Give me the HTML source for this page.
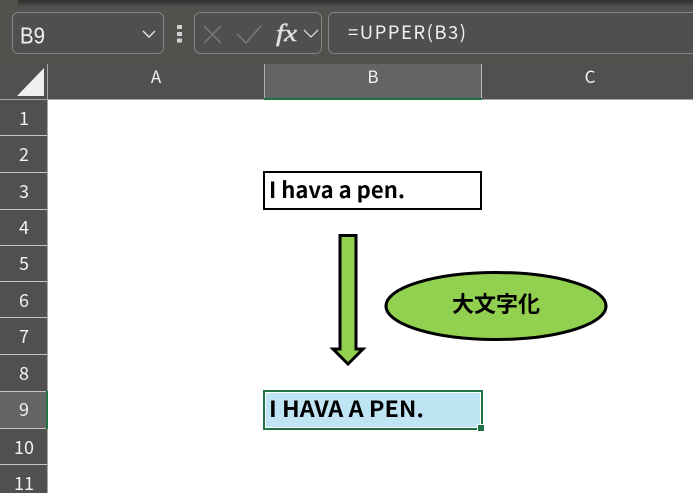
<!DOCTYPE html>
<html><head><meta charset="utf-8"><style>
html,body{margin:0;padding:0;background:#fff}
body{width:693px;height:493px;overflow:hidden;position:relative}
svg{position:absolute;left:0;top:0;display:block}
text{font-family:"Noto Sans CJK JP","Liberation Sans",sans-serif}
</style></head><body>
<svg width="693" height="493" viewBox="0 0 693 493" xmlns="http://www.w3.org/2000/svg">
<defs><linearGradient id="t" x1="0" y1="0" x2="0" y2="1"><stop offset="0" stop-color="#2e2e2c"/><stop offset="1" stop-color="#525250"/></linearGradient></defs>
<!-- toolbar -->
<rect x="0" y="0" width="693" height="64" fill="#51514e"/>
<rect x="0" y="0" width="693" height="7" fill="url(#t)"/>
<rect x="0" y="0" width="18" height="7" fill="#51514e"/>
<rect x="12.500" y="12.500" width="151" height="41" rx="6" fill="#4f4f4f" stroke="#858585"/>
<text x="20" y="43.500" font-size="23" fill="#f2f2f2" style="font-family:'Liberation Sans',sans-serif" textLength="25" lengthAdjust="spacingAndGlyphs">B9</text>
<path d="M143 31l6 6 6-6" fill="none" stroke="#e6e6e6" stroke-width="1.400"/>
<rect x="177" y="25" width="5" height="4" fill="#cfcfcf"/><rect x="177" y="32" width="5" height="4" fill="#cfcfcf"/><rect x="177" y="38.500" width="5" height="4" fill="#cfcfcf"/>
<rect x="194.500" y="12.500" width="127" height="41" rx="6" fill="#4f4f4f" stroke="#858585"/>
<path d="M204 26l17 17M221 26l-17 17" stroke="#7b7b7b" stroke-width="1.500" fill="none"/>
<path d="M237 34l9 9 15-17" stroke="#7b7b7b" stroke-width="1.500" fill="none"/>
<text x="276" y="41" font-size="24" font-style="italic" fill="#e0e0e0" stroke="#e0e0e0" stroke-width=".5" style="font-family:'Liberation Serif',serif" textLength="21" lengthAdjust="spacingAndGlyphs">fx</text>
<path d="M304 30l7 7 7-7" fill="none" stroke="#d8d8d8" stroke-width="1.300"/>
<rect x="328.500" y="12.500" width="380" height="41" rx="6" fill="#4f4f4f" stroke="#858585"/>
<text x="348" y="39" font-size="18.500" fill="#f2f2f2" textLength="118" lengthAdjust="spacing">=UPPER(B3)</text>
<!-- column header -->
<rect x="0" y="64" width="693" height="36" fill="#505050"/>
<rect x="265" y="64" width="216" height="35" fill="#646464"/>
<path d="M44 68V96H17Z" fill="#efefef"/>
<rect x="47" y="64" width="1" height="35" fill="#a8a8a8"/>
<rect x="264" y="64" width="1" height="35" fill="#b0b0b0"/>
<rect x="481" y="64" width="1" height="35" fill="#b8b8b8"/>
<rect x="0" y="99" width="693" height="1" fill="#a5a5a5"/>
<rect x="264" y="98" width="218" height="2" fill="#217346"/>
<g font-size="17" fill="#f2f2f2" text-anchor="middle">
<text x="156" y="83">A</text><text x="373" y="83">B</text><text x="590" y="83">C</text>
</g>
<!-- row header -->
<rect x="0" y="100" width="47" height="393" fill="#505050"/>
<rect x="0" y="391" width="46" height="37" fill="#646464"/>
<rect x="47" y="100" width="1" height="393" fill="#a5a5a5"/>
<g fill="#c4c4c4">
<rect x="0" y="135" width="47" height="1"/><rect x="0" y="172" width="47" height="1"/><rect x="0" y="209" width="47" height="1"/><rect x="0" y="245" width="47" height="1"/><rect x="0" y="281" width="47" height="1"/><rect x="0" y="317" width="47" height="1"/><rect x="0" y="354" width="47" height="1"/><rect x="0" y="391" width="47" height="1"/><rect x="0" y="428" width="47" height="1"/><rect x="0" y="464" width="47" height="1"/>
</g>
<rect x="46" y="391" width="2" height="38" fill="#217346"/>
<g font-size="18" fill="#f2f2f2" text-anchor="middle">
<text x="24" y="125">1</text><text x="24" y="161">2</text><text x="24" y="198">3</text><text x="24" y="234">4</text><text x="24" y="270">5</text><text x="24" y="307">6</text><text x="24" y="343">7</text><text x="24" y="380">8</text><text x="24" y="416">9</text><text x="24" y="454">10</text><text x="24" y="490">11</text>
</g>
<!-- cell B3 -->
<rect x="264" y="172" width="217" height="37" fill="#fff" stroke="#000" stroke-width="2"/>
<text x="269" y="198" font-size="22" font-weight="bold" fill="#000" textLength="136" lengthAdjust="spacingAndGlyphs">I hava a pen.</text>
<!-- arrow -->
<path d="M340 235.500H356V349H363L348 364 333 349H340Z" fill="#92d050" stroke="#000" stroke-width="3"/>
<!-- ellipse -->
<ellipse cx="496" cy="306" rx="110" ry="33.500" fill="#92d050" stroke="#000" stroke-width="3"/>
<text x="496" y="312" font-size="22" font-weight="bold" fill="#000" text-anchor="middle">大文字化</text>
<!-- cell B9 -->
<rect x="264" y="391" width="218" height="38" fill="#bfe4f4" stroke="#217346" stroke-width="2"/>
<rect x="265.500" y="392.500" width="215" height="35" fill="none" stroke="#fff" stroke-width="1"/>
<text x="269" y="417" font-size="22" font-weight="bold" fill="#000" textLength="155" lengthAdjust="spacingAndGlyphs">I HAVA A PEN.</text>
<rect x="477" y="424" width="8" height="8" fill="#fff"/>
<rect x="478" y="425" width="6" height="6" fill="#217346"/>
</svg>
</body></html>
